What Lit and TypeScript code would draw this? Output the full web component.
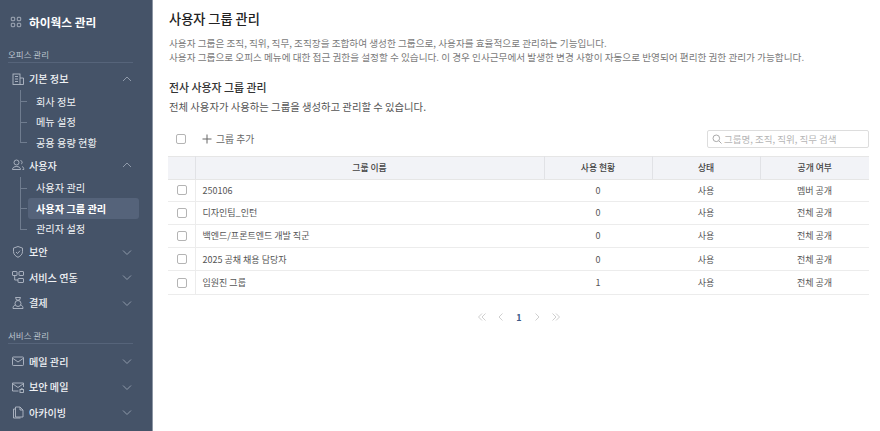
import { LitElement, html, css, svg } from "lit";
import { customElement } from "lit/decorators.js";

const stroke = (c: unknown, size = 14) => html`<svg class="ic" width=${size} height=${size} viewBox="0 0 14 14" fill="none" stroke="currentColor" stroke-width=".85">${c}</svg>`;
const icons: Record<string, unknown> = {
  grid: svg`<rect x="1.5" y="1.5" width="4" height="4" rx=".7"/><rect x="8.5" y="1.5" width="4" height="4" rx=".7"/><rect x="1.5" y="8.5" width="4" height="4" rx=".7"/><rect x="8.5" y="8.5" width="4" height="4" rx=".7"/>`,
  building: svg`<rect x="2" y="2" width="7" height="10.500"/><path d="M9 6h3.500v6.500H9M4 4.500h3M4 7h3M4 9.500h3"/>`,
  users: svg`<circle cx="5.500" cy="4.500" r="2.500"/><path d="M1.500 11.500c0-2 1.800-3 4-3s4 1 4 3zM9.500 2.500c1.300.3 1.800 1.300 1.600 2.300-.1.600-.4 1-.9 1.200M11 8.500c1 .4 1.800 1.200 1.800 3h-1.300"/>`,
  shield: svg`<path d="M7 1.500l4.500 1.600v3.400c0 2.700-1.800 4.500-4.500 5.800-2.700-1.300-4.500-3.100-4.500-5.800V3.100z"/><path d="M5 7l1.500 1.500 2.500-2.800"/>`,
  link: svg`<rect x="1.500" y="1.500" width="4.500" height="4" rx=".5"/><rect x="8" y="1.500" width="4.500" height="4" rx=".5"/><rect x="7" y="8.500" width="5.500" height="4" rx=".5"/><path d="M3.700 5.500v4.500h3.300"/>`,
  pay: svg`<path d="M4.500 1.500h5L8.500 4h-3z"/><circle cx="7" cy="7.500" r="3"/><path d="M2 12.500c0-2 .800-3 2.200-3.500M12 12.500c0-2-.800-3-2.200-3.500M2 12.500h10"/>`,
  mail: svg`<rect x="1.500" y="3" width="11" height="8.500" rx=".8"/><path d="M2 4.500l5 3.500 5-3.500"/>`,
  secmail: svg`<path d="M7.500 11H1.500V3h11v4"/><path d="M2 4l5 3.500L12 4"/><rect x="9" y="9.500" width="3.500" height="3"/><path d="M9.800 9.500c0-1.400 2-1.400 2 0"/>`,
  archive: svg`<path d="M4.500 2h4.500l3 3v7H4.500z"/><path d="M9 2v3h3M4.500 4H2.500v9h7"/>`,
};
const chev = (up: boolean) => html`<svg class="chev" width="10" height="10" viewBox="0 0 10 10" fill="none" stroke="currentColor" stroke-width="1"><path d=${up ? "M1 7l4-4 4 4" : "M1 3.500l4 4 4-4"}/></svg>`;

const rows = [
  ["250106", "0", "사용", "멤버 공개"],
  ["디자인팀_인턴", "0", "사용", "전체 공개"],
  ["백엔드/프론트엔드 개발 직군", "0", "사용", "전체 공개"],
  ["2025 공채 채용 담당자", "0", "사용", "전체 공개"],
  ["임원진 그룹", "1", "사용", "전체 공개"],
];

@customElement("app-root")
export class AppRoot extends LitElement {
  static styles = css`
    :host { display: flex; width: 880px; height: 431px; overflow: hidden; background: #fff; font-family: "Noto Sans CJK KR", "Noto Sans", sans-serif; font-size: 9.500px; color: #444; }
    * { box-sizing: border-box; }
    .side { width: 153px; flex: none; height: 431px; background: #455368; border-right: 1px solid #8d97a5; color: #f0f2f5; padding: 0 19px 0 8px; }
    .brand { display: flex; align-items: center; gap: 7px; height: 43px; padding-left: 2px; font-size: 11.700px; font-weight: 700; color: #fff; margin-bottom: 3px; }
    .brand .ic { color: #c8ced7; }
    .section { height: 17px; margin-bottom: 3px; font-size: 8.500px; line-height: 16px; color: #bcc4ce; border-bottom: 1px solid #56647a; }
    .section.svc { margin-top: 11px; margin-bottom: 5px; }
    .item { display: flex; align-items: center; height: 25.500px; padding-left: 3px; font-size: 10.100px; font-weight: 500; gap: 4px; }
    .item .ic { color: #b9c1cc; }
    .item span { flex: 1; }
    .chev { color: #8f9aaa; margin-right: 1px; }
    .subs { margin-top: -0.5px; }
    .sub { position: relative; display: flex; align-items: center; height: 20.500px; padding-left: 8px; margin-left: 20px; width: 111px; font-size: 10.200px; border-radius: 3px; }
    .sub.on { background: #55637a; font-weight: 700; color: #fff; }
    .sub::before { content: ""; position: absolute; left: -8px; top: 10px; width: 7px; border-top: 1px solid #6f7c8f; }
    .sub::after { content: ""; position: absolute; left: -8px; top: -1px; height: 11px; border-left: 1px solid #6f7c8f; }
    .sub + .sub::after { top: -10px; height: 20px; }
    main { flex: 1; min-width: 0; padding: 10px 11px 0 16px; }
    h1 { margin: 0; font-size: 13.200px; line-height: 18px; font-weight: 500; color: #222; }
    .desc { margin: 8px 0 0; font-size: 9.650px; line-height: 14px; color: #7a7a7a; white-space: nowrap; }
    h2 { margin: 16px 0 0; font-size: 10.900px; line-height: 15px; font-weight: 500; color: #333; }
    .lead { margin: 5px 0 0; font-size: 10.350px; line-height: 14px; color: #555; }
    .tools { display: flex; align-items: center; height: 20px; margin-top: 15px; }
    .cb { display: block; width: 10px; height: 10px; border: 1px solid #b4b4b4; border-radius: 2px; background: #fff; flex: none; }
    .tools .cb { margin-left: 7px; }
    .add { display: flex; align-items: center; gap: 4px; margin-left: 16px; font-size: 9.800px; color: #666; }
    .search { margin-left: auto; width: 162px; height: 18px; display: flex; align-items: center; gap: 2px; padding-left: 4px; border: 1px solid #ddd; border-radius: 2px; font-size: 9.500px; color: #b5b5b5; }
    table { width: 701px; margin: 6.500px 0 0 -1px; border-collapse: collapse; table-layout: fixed; font-size: 9px; }
    th { height: 23px; padding: 0; background: #f2f3f7; border-top: 1px solid #e6e6e6; border-bottom: 1px solid #e6e6e6; border-right: 1px solid #e1e2e6; font-weight: 500; color: #444; font-size: 8.800px; }
    th:last-child, td:last-child { border-right: 0; }
    td { height: 23.300px; padding: 0; text-align: center; border-bottom: 1px solid #ececec; color: #555; }
    tbody tr:first-child td { height: 22px; }
    td:first-child { border-right: 1px solid #ececec; }
    td:first-child .cb { margin: 0 auto; position: relative; left: 1px; }
    td.name { text-align: left; padding-left: 7px; }
    .pager { display: flex; justify-content: center; align-items: center; gap: 9.500px; margin-top: 15.500px; height: 14px; color: #cfcfcf; }
    .pager b { font-size: 9px; color: #3d5a86; margin: 0 .5px; font-weight: 700; }
  `;

  private item(icon: string, label: string, up = false) {
    return html`<div class="item">${stroke(icons[icon])}<span>${label}</span>${chev(up)}</div>`;
  }
  private subs(list: string[], on = "") {
    return html`<div class="subs">${list.map((s) => html`<div class="sub ${s === on ? "on" : ""}">${s}</div>`)}</div>`;
  }

  render() {
    const pg = (d: string) => html`<svg width="10" height="10" viewBox="0 0 10 10" fill="none" stroke="currentColor" stroke-width="1"><path d=${d}/></svg>`;
    return html`
      <nav class="side">
        <div class="brand">${stroke(icons.grid, 12)}하이웍스 관리</div>
        <div class="section">오피스 관리</div>
        ${this.item("building", "기본 정보", true)}
        ${this.subs(["회사 정보", "메뉴 설정", "공용 용량 현황"])}
        ${this.item("users", "사용자", true)}
        ${this.subs(["사용자 관리", "사용자 그룹 관리", "관리자 설정"], "사용자 그룹 관리")}
        ${this.item("shield", "보안")}
        ${this.item("link", "서비스 연동")}
        ${this.item("pay", "결제")}
        <div class="section svc">서비스 관리</div>
        ${this.item("mail", "메일 관리")}
        ${this.item("secmail", "보안 메일")}
        ${this.item("archive", "아카이빙")}
      </nav>
      <main>
        <h1>사용자 그룹 관리</h1>
        <p class="desc">사용자 그룹은 조직, 직위, 직무, 조직장을 조합하여 생성한 그룹으로, 사용자를 효율적으로 관리하는 기능입니다.<br />사용자 그룹으로 오피스 메뉴에 대한 접근 권한을 설정할 수 있습니다. 이 경우 인사근무에서 발생한 변경 사항이 자동으로 반영되어 편리한 권한 관리가 가능합니다.</p>
        <h2>전사 사용자 그룹 관리</h2>
        <p class="lead">전체 사용자가 사용하는 그룹을 생성하고 관리할 수 있습니다.</p>
        <div class="tools">
          <i class="cb"></i>
          <div class="add"><svg width="10" height="10" viewBox="0 0 10 10" fill="none" stroke="#666" stroke-width="1"><path d="M5 .5v9M.5 5h9"/></svg>그룹 추가</div>
          <div class="search"><svg width="10" height="10" viewBox="0 0 10 10" fill="none" stroke="#aaa" stroke-width="1"><circle cx="4.300" cy="4.300" r="3.300"/><path d="M6.800 6.800l2.700 2.700"/></svg>그룹명, 조직, 직위, 직무 검색</div>
        </div>
        <table>
          <colgroup><col style="width:27px" /><col style="width:349px" /><col style="width:108px" /><col style="width:108px" /><col style="width:109px" /></colgroup>
          <thead><tr><th></th><th>그룹 이름</th><th>사용 현황</th><th>상태</th><th>공개 여부</th></tr></thead>
          <tbody>
            ${rows.map((r) => html`<tr><td><i class="cb"></i></td><td class="name">${r[0]}</td><td>${r[1]}</td><td>${r[2]}</td><td>${r[3]}</td></tr>`)}
          </tbody>
        </table>
        <div class="pager">
          ${pg("M5 1.500L1.500 5 5 8.500M8.500 1.500L5 5l3.500 3.500")}
          ${pg("M6.500 1.500L3 5l3.500 3.500")}
          <b>1</b>
          ${pg("M3.500 1.500L7 5 3.500 8.500")}
          ${pg("M1.500 1.500L5 5 1.500 8.500M5 1.500L8.500 5 5 8.500")}
        </div>
      </main>
    `;
  }
}
